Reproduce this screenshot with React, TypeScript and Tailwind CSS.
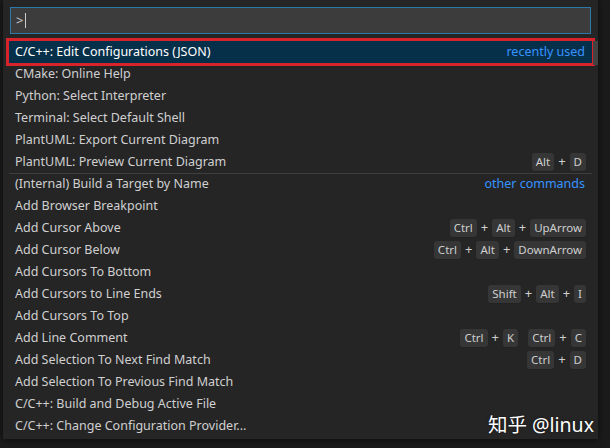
import React from "react";

type Row = {
  label: string;
  right?: { type: "link"; text: string } | { type: "keys"; chords: string[][] };
  sep?: boolean;
  selected?: boolean;
};

const rows: Row[] = [
  { label: "C/C++: Edit Configurations (JSON)", right: { type: "link", text: "recently used" }, selected: true },
  { label: "CMake: Online Help" },
  { label: "Python: Select Interpreter" },
  { label: "Terminal: Select Default Shell" },
  { label: "PlantUML: Export Current Diagram" },
  { label: "PlantUML: Preview Current Diagram", right: { type: "keys", chords: [["Alt", "D"]] } },
  { label: "(Internal) Build a Target by Name", right: { type: "link", text: "other commands" }, sep: true },
  { label: "Add Browser Breakpoint" },
  { label: "Add Cursor Above", right: { type: "keys", chords: [["Ctrl", "Alt", "UpArrow"]] } },
  { label: "Add Cursor Below", right: { type: "keys", chords: [["Ctrl", "Alt", "DownArrow"]] } },
  { label: "Add Cursors To Bottom" },
  { label: "Add Cursors to Line Ends", right: { type: "keys", chords: [["Shift", "Alt", "I"]] } },
  { label: "Add Cursors To Top" },
  { label: "Add Line Comment", right: { type: "keys", chords: [["Ctrl", "K"], ["Ctrl", "C"]] } },
  { label: "Add Selection To Next Find Match", right: { type: "keys", chords: [["Ctrl", "D"]] } },
  { label: "Add Selection To Previous Find Match" },
  { label: "C/C++: Build and Debug Active File" },
  { label: "C/C++: Change Configuration Provider..." },
];

function Key({ k }: { k: string }) {
  return (
    <span className="inline-flex h-[19px] items-center rounded-[3px] bg-[#363637] px-[4px] text-[11.5px] text-[#cfcfcf] shadow-[inset_0_-1px_0_rgba(0,0,0,0.36)]">
      {k}
    </span>
  );
}

function Keys({ chords }: { chords: string[][] }) {
  return (
    <div className="flex items-center gap-[10px]">
      {chords.map((c, ci) => (
        <div key={ci} className="flex items-center">
          {c.map((k, i) => (
            <React.Fragment key={i}>
              {i > 0 && <span className="px-[4px] text-[13px] text-[#cfcfcf]">+</span>}
              <Key k={k} />
            </React.Fragment>
          ))}
        </div>
      ))}
    </div>
  );
}

export default function App() {
  return (
    <div
      className="relative h-[448px] w-[610px] overflow-hidden bg-[#1b1b1c]"
      style={{ fontFamily: '"Noto Sans", "Open Sans", sans-serif' }}
    >
      <div className="ml-[3px] flex h-[439px] w-[595px] flex-col bg-[#252526] pt-[7px] shadow-[0_0_8px_rgba(0,0,0,0.6)]">
        <div className="mx-[7px] flex h-[27px] items-center border border-[#2b79a8] bg-[#3c3c3c] pl-[5px] text-[13px] text-[#cccccc]">
          <span>&gt;</span>
          <span className="ml-[2px] inline-block h-[15px] w-px bg-[#cccccc]" />
        </div>
        <div className="relative mt-[7px] flex flex-col">
          <div className="absolute right-0 top-0 h-[24px] w-[5px] bg-[#424242]" />
          {rows.map((r, i) => (
            <div
              key={i}
              className={
                (r.sep ? "border-t border-[#3e3e3f] " : "") +
                (r.selected
                  ? "mx-[6px] bg-[#062f4a] px-[6px] text-white outline outline-[3px] outline-[#d8232a] "
                  : "mx-[6px] px-[6px] text-[#d0d0d0] ") +
                "flex h-[22px] items-center justify-between text-[12.5px]"
              }
            >
              <span className="whitespace-nowrap">{r.label}</span>
              {r.right && r.right.type === "link" && (
                <span className="pr-[1px] text-[#3794ff]">{r.right.text}</span>
              )}
              {r.right && r.right.type === "keys" && <Keys chords={r.right.chords} />}
            </div>
          ))}
        </div>
      </div>
      <div
        className="absolute bottom-[14px] right-[16px] text-[19.5px] leading-none text-white [text-shadow:0_0_2px_rgba(0,0,0,0.6)]"
        style={{ fontFamily: '"Noto Sans", "Noto Sans CJK SC", sans-serif' }}
      >
        知乎 @linux
      </div>
    </div>
  );
}
